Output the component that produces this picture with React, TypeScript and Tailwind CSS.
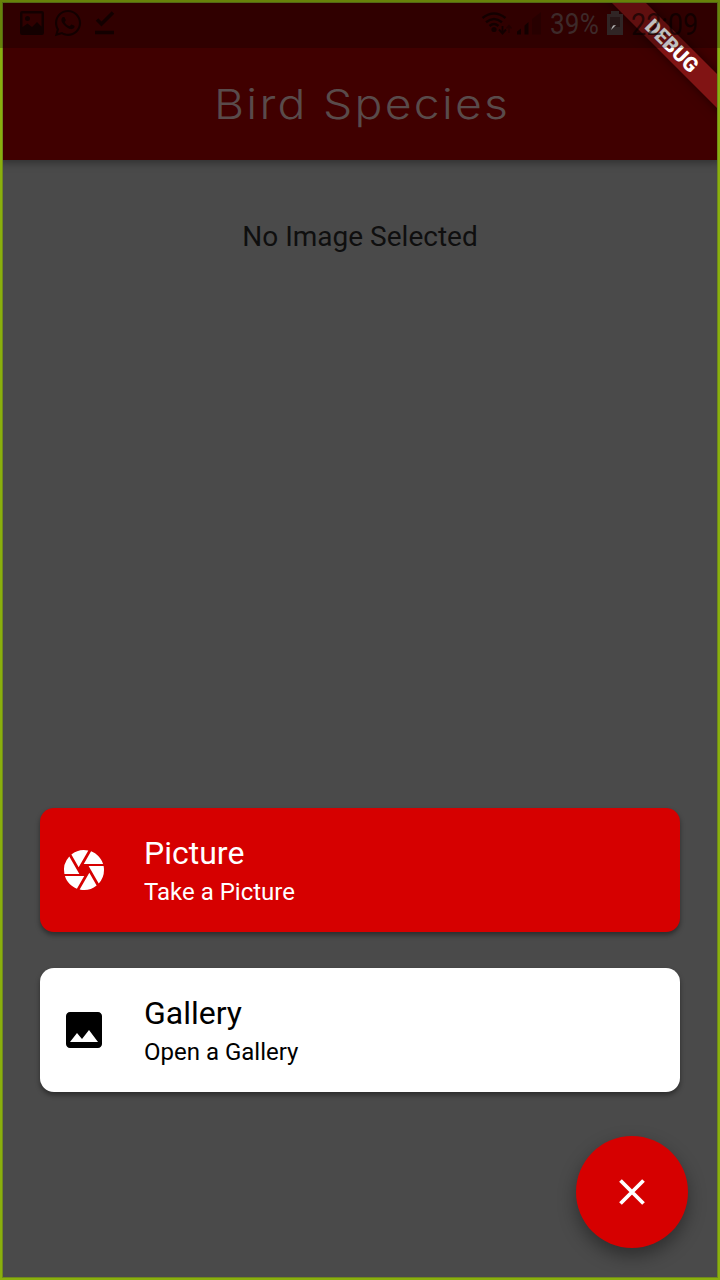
import React from 'react';
import { MdCamera, MdImage } from 'react-icons/md';
import { FaWhatsapp } from 'react-icons/fa';

function StatusBar() {
  return (
    <div className="absolute inset-x-0 top-0 flex h-12 items-center bg-black/25 pl-5 pr-[21px] text-black/60">
      <svg className="size-6 -translate-y-px" viewBox="0 0 24 24">
        <path
          d="M2 0h20a2 2 0 0 1 2 2v20a2 2 0 0 1-2 2H2a2 2 0 0 1-2-2V2a2 2 0 0 1 2-2zM2.500 2.500V16l5-3.500 4.500 3.500 5-5 4.500 4.500v-13zM7.500 5a2.500 2.500 0 1 1 0 5 2.500 2.500 0 0 1 0-5z"
          fill="currentColor"
          fillRule="evenodd"
        />
      </svg>
      <FaWhatsapp className="ml-[9px] size-[30px] shrink-0 -translate-y-px" />
      <svg className="ml-[12px] h-6 w-5 -translate-y-px" viewBox="0 0 20 24" fill="none" stroke="currentColor">
        <path d="M2 8.500l4.500 4.500L18 1.500" strokeWidth="3.600" />
        <path d="M0 21.500h19" strokeWidth="3.600" />
      </svg>
      <div className="flex-1" />
      <svg className="h-7 w-[62px]" viewBox="0 0 62 28" fill="none" stroke="currentColor" strokeWidth="2.500">
        <path d="M2.500 8q11.500-9 23 0M6 12.300q8-6.500 16 0M9.500 16q4.500-4 9 0" />
        <circle cx="14" cy="19.500" r="2.600" fill="currentColor" stroke="none" />
        <path d="M22.500 16v7m-3.500-3.500l3.500 4 3.500-4" strokeWidth="1.900" />
        <path d="M29 23v-7m-2.500 2.500l2.500-3 2.500 3" strokeWidth="1.500" opacity=".45" />
        <path d="M37 24.500v-3l4-3v6zM44.500 24.500v-9l4-3.500v12.500z" fill="currentColor" stroke="none" />
        <path d="M52 24.500V9l9-7v22.500z" fill="currentColor" stroke="none" opacity=".3" />
      </svg>
      <span className="ml-2 w-12 whitespace-nowrap font-['Roboto'] text-[30px] leading-none tracking-[0.2px] text-[#3d2a2a]">
        <span className="inline-block origin-left scale-x-[.87]">39%</span>
      </span>
      <svg className="ml-[9px] h-6 w-4 -translate-y-px" viewBox="0 0 16 24">
        <path d="M4 0h8v3h4v21H0V3h4z" fill="#302525" />
        <path d="M3 6h10v10H3z" fill="#261616" />
        <path d="M9 14L4 19l2-4.500z" fill="#bbb" />
      </svg>
      <span className="ml-2 w-[68px] whitespace-nowrap font-['Roboto'] text-[31px] leading-none">
        <span className="inline-block origin-left scale-x-[.87]">22:09</span>
      </span>
    </div>
  );
}

function Banner() {
  return (
    <div className="absolute right-0 top-0 size-[140px] overflow-hidden">
      <div className="absolute left-[-10px] top-[36px] flex h-6 w-[208px] rotate-45 items-center justify-center bg-[#811414] pr-[6px] font-['Roboto'] text-[20.4px] font-black leading-none text-white shadow-[0_0_12px_rgba(0,0,0,0.5)]">
        DEBUG
      </div>
    </div>
  );
}

type OptionProps = { icon: React.ReactNode; title: string; subtitle: string; tone: string };

function Option({ icon, title, subtitle, tone }: OptionProps) {
  return (
    <button className={`flex h-[124px] items-center rounded-[14px] pl-5 text-left font-['Roboto'] shadow-[0_3px_5px_rgba(0,0,0,0.4)] ${tone}`}>
      {icon}
      <span className="ml-9 flex flex-col">
        <span className="text-[32px] leading-[36px]">{title}</span>
        <span className="mt-[7px] text-[24px] leading-7">{subtitle}</span>
      </span>
    </button>
  );
}

export default function App() {
  return (
    <div className="relative flex h-[1280px] w-[720px] flex-col overflow-hidden bg-[#4a4a4a]">
      <header className="flex h-40 shrink-0 items-center justify-center bg-[#400000] pt-12 shadow-[0_3px_8px_rgba(0,0,0,0.35)]">
        <h1 className="origin-center translate-x-[2px] scale-x-[1.13] whitespace-nowrap font-['Inter'] text-[41px] font-light leading-none tracking-[2px] text-[#594b4b]">Bird Species</h1>
      </header>
      <p className="mt-[60px] text-center font-['Roboto'] text-[28px] leading-[33px] text-[#0f0f0f]">No Image Selected</p>
      <main className="mt-auto flex flex-col gap-9 px-10">
        <Option icon={<MdCamera className="size-12" />} title="Picture" subtitle="Take a Picture" tone="bg-[#d60000] text-white" />
        <Option icon={<MdImage className="size-12" />} title="Gallery" subtitle="Open a Gallery" tone="bg-white text-black" />
      </main>
      <button aria-label="Close" className="mb-8 mr-8 mt-11 flex size-28 shrink-0 items-center justify-center self-end rounded-full bg-[#d60000] text-white shadow-[0_8px_18px_rgba(0,0,0,0.38)]">
        <svg className="size-8" viewBox="0 0 32 32" fill="none" stroke="currentColor" strokeWidth="3.800">
          <path d="M4.500 4.500l23 23M27.500 4.500l-23 23" />
        </svg>
      </button>
      <Banner />
      <div className="pointer-events-none absolute inset-0 border-2 border-[#8aaf0d]">
        <div className="size-full border border-[#6f8a1c]" />
      </div>
      <StatusBar />
    </div>
  );
}
